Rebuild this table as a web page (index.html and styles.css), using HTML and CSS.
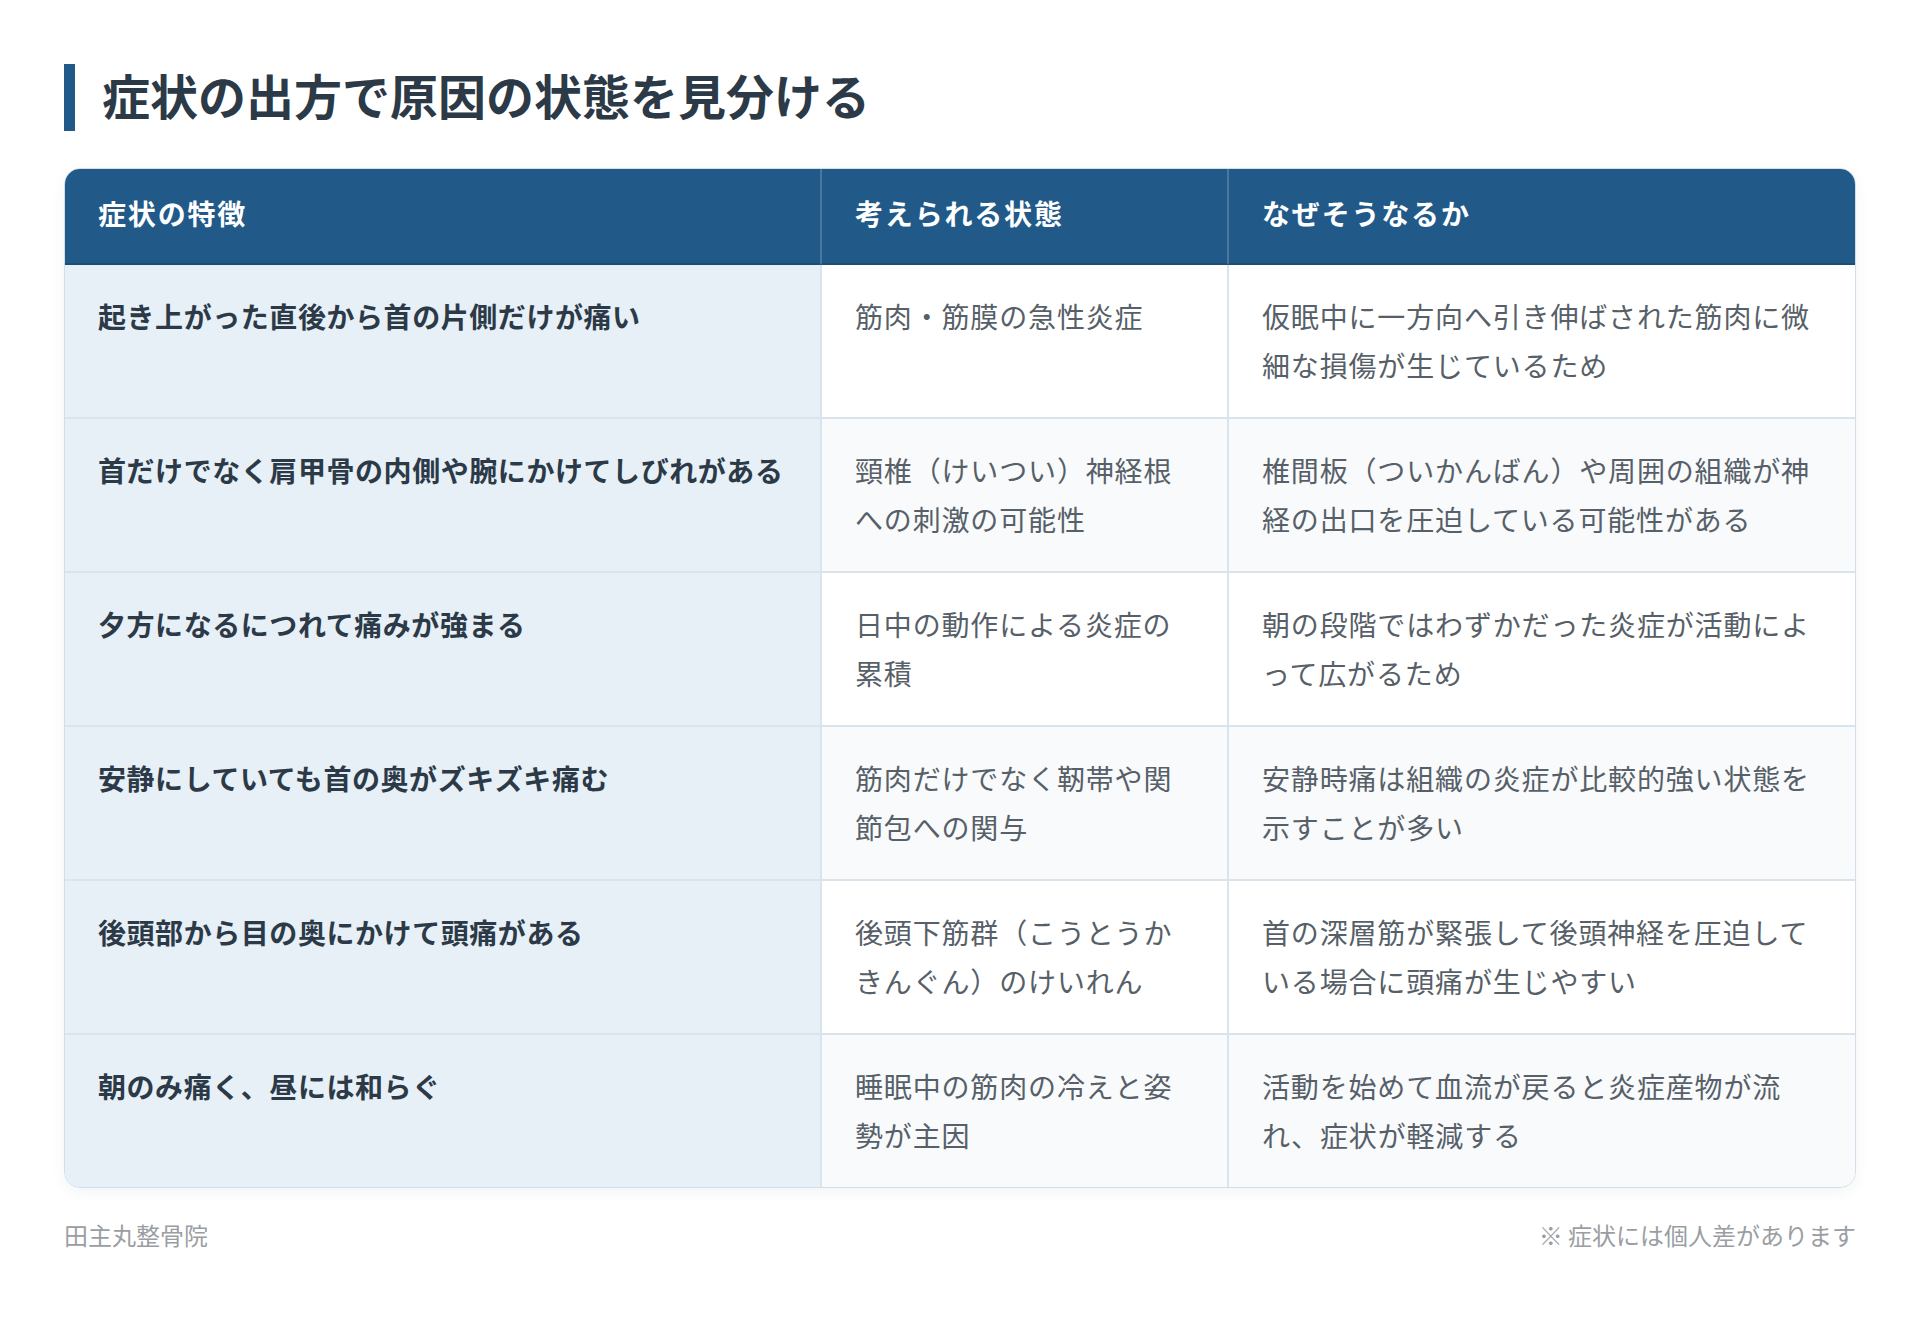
FILE: index.html
```html
<!DOCTYPE html>
<html lang="ja">
<head>
<meta charset="utf-8">
<title>症状の出方で原因の状態を見分ける</title>
<link rel="stylesheet" href="styles.css">
</head>
<body>
<main class="page">
  <h1 class="title">症状の出方で原因の状態を見分ける</h1>
  <div class="table-wrap">
    <table class="symptoms">
      <colgroup>
        <col class="c1"><col class="c2"><col class="c3">
      </colgroup>
      <thead>
        <tr><th>症状の特徴</th><th>考えられる状態</th><th>なぜそうなるか</th></tr>
      </thead>
      <tbody>
        <tr>
          <td class="feature">起き上がった直後から首の片側だけが痛い</td>
          <td>筋肉・筋膜の急性炎症</td>
          <td>仮眠中に一方向へ引き伸ばされた筋肉に微細な損傷が生じているため</td>
        </tr>
        <tr>
          <td class="feature">首だけでなく肩甲骨の内側や腕にかけてしびれがある</td>
          <td>頸椎（けいつい）神経根への刺激の可能性</td>
          <td>椎間板（ついかんばん）や周囲の組織が神経の出口を圧迫している可能性がある</td>
        </tr>
        <tr>
          <td class="feature">夕方になるにつれて痛みが強まる</td>
          <td>日中の動作による炎症の累積</td>
          <td>朝の段階ではわずかだった炎症が活動によって広がるため</td>
        </tr>
        <tr>
          <td class="feature">安静にしていても首の奥がズキズキ痛む</td>
          <td>筋肉だけでなく靭帯や関節包への関与</td>
          <td>安静時痛は組織の炎症が比較的強い状態を示すことが多い</td>
        </tr>
        <tr>
          <td class="feature">後頭部から目の奥にかけて頭痛がある</td>
          <td>後頭下筋群（こうとうかきんぐん）のけいれん</td>
          <td>首の深層筋が緊張して後頭神経を圧迫している場合に頭痛が生じやすい</td>
        </tr>
        <tr>
          <td class="feature">朝のみ痛く、昼には和らぐ</td>
          <td>睡眠中の筋肉の冷えと姿勢が主因</td>
          <td>活動を始めて血流が戻ると炎症産物が流れ、症状が軽減する</td>
        </tr>
      </tbody>
    </table>
  </div>
  <footer class="foot">
    <span class="clinic">田主丸整骨院</span>
    <span class="note">※ 症状には個人差があります</span>
  </footer>
</main>
</body>
</html>
```

FILE: styles.css
```css
html, body {
  margin: 0;
  padding: 0;
  background: #ffffff;
}

body {
  font-family: "Noto Sans CJK JP", "Noto Sans", sans-serif;
  color: #2c3e50;
}

.page {
  padding: 64px 64px 40px 64px;
}

.title {
  margin: 0 0 37px 0;
  border-left: 11px solid #215a89;
  padding-left: 27px;
  padding-bottom: 6px;
  font-size: 48px;
  line-height: 61px;
  font-weight: 700;
  color: #2c3a47;
  letter-spacing: 0;
}

.table-wrap {
  border: 1px solid #d3dee8;
  border-radius: 16px;
  overflow: hidden;
  box-shadow: 0 4px 14px rgba(30, 60, 90, 0.06);
}

.symptoms {
  width: 100%;
  border-collapse: separate;
  border-spacing: 0;
  table-layout: fixed;
}

.c1 { width: 755px; }
.c2 { width: 407px; }
.c3 { width: auto; }

.symptoms th {
  background: #215a89;
  color: #ffffff;
  text-align: left;
  font-size: 28px;
  font-weight: 700;
  letter-spacing: 0.065em;
  line-height: 40px;
  padding: 24px 33px 30px 33px;
  border-bottom: 2px solid #1b4d76;
}

.symptoms th + th {
  border-left: 2px solid rgba(255, 255, 255, 0.18);
}

.symptoms td {
  vertical-align: top;
  font-size: 28px;
  line-height: 49px;
  letter-spacing: 0.03em;
  padding: 27px 33px 27px 33px;
  color: #575f68;
  background: #ffffff;
  border-bottom: 2px solid #d9e4ed;
}

.symptoms td + td {
  border-left: 2px solid #d9e4ed;
}

.symptoms tbody tr:nth-child(even) td {
  background: #f8fafc;
}

.symptoms tbody tr td.feature {
  background: #e7eff7;
  color: #2c3a47;
  font-weight: 700;
  letter-spacing: 0.02em;
  padding-right: 20px;
}

.symptoms tbody tr:last-child td {
  border-bottom: none;
}

.foot {
  display: flex;
  justify-content: space-between;
  align-items: center;
  margin-top: 29px;
  font-size: 24px;
  line-height: 36px;
  color: #9a9ea3;
}
```
